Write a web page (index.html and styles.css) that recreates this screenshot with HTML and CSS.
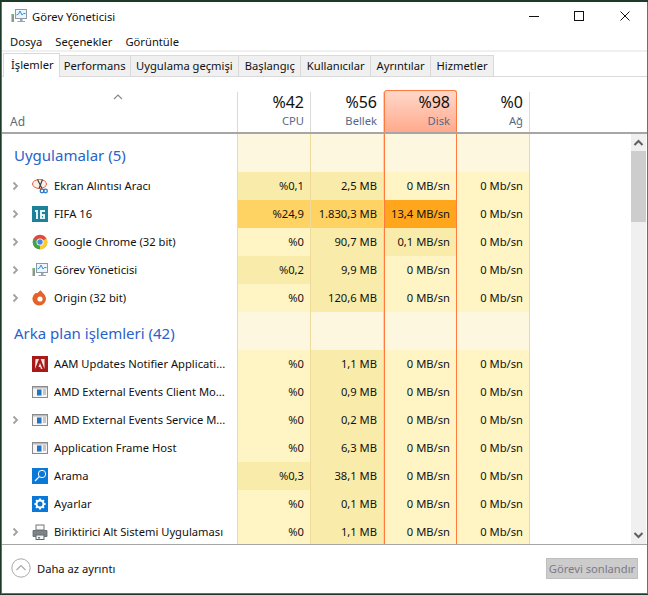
FILE: index.html
```html
<!DOCTYPE html>
<html lang="tr">
<head>
<meta charset="utf-8">
<title>Görev Yöneticisi</title>
<link rel="stylesheet" href="styles.css">
</head>
<body>
<svg class="sprites" width="0" height="0">
  <defs>
    <symbol id="i-tm" viewBox="0 0 16 16">
      <rect x="0.5" y="6" width="2.5" height="8" fill="#8a9a8a"/>
      <rect x="0.8" y="6" width="2" height="2" fill="#5ec45e"/>
      <rect x="4.5" y="1.5" width="11" height="9" fill="#eef4fb" stroke="#8d9aa6"/>
      <path d="M5.5 7l2-1 1.5-3 2 4 1.5-1.5h2" fill="none" stroke="#2f8fdc"/>
      <path d="M9 11h2.5v2H14v1H6.5v-1H9z" fill="#9aa4ac"/>
    </symbol>
    <symbol id="i-snip" viewBox="0 0 16 16">
      <ellipse cx="7.5" cy="6" rx="7" ry="4.5" fill="#fdeee8" stroke="#e2603c"/>
      <path d="M5.5 1.5l4.5 9M10.5 1.5l-3.5 9" stroke="#444" stroke-width="1.2" fill="none"/>
      <circle cx="10" cy="13" r="1.8" fill="none" stroke="#2a78c8" stroke-width="1.3"/>
      <circle cx="13.5" cy="13" r="1.8" fill="none" stroke="#2a78c8" stroke-width="1.3"/>
    </symbol>
    <symbol id="i-fifa" viewBox="0 0 16 16">
      <rect width="16" height="16" fill="#1c8199"/>
      <path d="M3 4h3v9H4V6H3zM8 4h5v2H10v2h3v5H8zM10 10v1.500h1V10z" fill="#e4f2f5" fill-rule="evenodd"/>
    </symbol>
    <symbol id="i-chrome" viewBox="0 0 16 16">
      <circle cx="8" cy="8" r="7.300" fill="#dd4a3a"/>
      <path d="M8 8L1.700 4.400A7.300 7.300 0 0 0 8 15.300z" fill="#3da64f"/>
      <path d="M8 8l6.500-3.500A7.300 7.300 0 0 1 8 15.300z" fill="#fbcd30"/>
      <circle cx="8" cy="8" r="3.500" fill="#fff"/>
      <circle cx="8" cy="8" r="2.700" fill="#4a86e0"/>
    </symbol>
    <symbol id="i-origin" viewBox="0 0 16 16">
      <path d="M8.500 0.200L11.200 3.200A6.800 6.800 0 1 1 3.200 3.200L5.500 3z" fill="#e2642c"/>
      <circle cx="8" cy="9" r="2.600" fill="#fff"/>
    </symbol>
    <symbol id="i-adobe" viewBox="0 0 16 16">
      <rect width="16" height="16" fill="#a81a1a"/>
      <path d="M3.500 3H7L3 13zM8.700 3h3.800v10zM8 7l2.500 6H9l-.7-2H6.500z" fill="#f4e6e6"/>
    </symbol>
    <symbol id="i-frame" viewBox="0 0 16 16">
      <rect x="0.500" y="2.500" width="15" height="11" fill="#f5f5f5" stroke="#8a8a8a"/>
      <rect x="5" y="5.500" width="4.500" height="6" fill="#1f74c8"/>
      <rect x="1" y="3" width="14" height="1.500" fill="#bbb"/>
      <path d="M11 6h3M11 8h3M11 10h3" stroke="#999"/>
    </symbol>
    <symbol id="i-search" viewBox="0 0 16 16">
      <rect width="16" height="16" fill="#0a78d7"/>
      <circle cx="10" cy="6" r="3.700" fill="none" stroke="#fff"/>
      <path d="M7.300 8.700L3 13" stroke="#fff" stroke-width="1.200"/>
    </symbol>
    <symbol id="i-gear" viewBox="0 0 16 16">
      <rect width="16" height="16" fill="#0a78d7"/>
      <circle cx="8" cy="8" r="3.500" fill="none" stroke="#fff" stroke-width="2"/>
      <path d="M8 2.500v2M8 11.500v2M2.500 8h2M11.500 8h2M4.100 4.100l1.400 1.400M10.500 10.500l1.400 1.400M4.100 11.900l1.400-1.400M10.500 5.500l1.400-1.400" stroke="#fff" stroke-width="2"/>
    </symbol>
    <symbol id="i-print" viewBox="0 0 16 16">
      <rect x="4" y="1" width="8" height="5" fill="#fafafa" stroke="#777"/>
      <path d="M1 6.500h14v6h-14z" fill="#7d8488" stroke="#5d6468" stroke-width="0.800"/>
      <rect x="4" y="11" width="8" height="4.500" fill="#f4f4f4" stroke="#666"/>
      <rect x="6" y="13" width="2" height="1.500" fill="#2a9a9a"/>
    </symbol>
    <symbol id="i-chev" viewBox="0 0 7 10">
      <path d="M1.500 1.500L5 5 1.500 8.500" fill="none" stroke="#a0a0a0" stroke-width="1.800"/>
    </symbol>
  </defs>
</svg>
<div class="window">
  <header class="titlebar">
    <svg class="title-icon"><use href="#i-tm"/></svg>
    <span class="title-text">Görev Yöneticisi</span>
    <div class="winctl">
      <svg class="ctl" viewBox="0 0 45 16"><path d="M17 8.500h10" stroke="#111" fill="none"/></svg>
      <svg class="ctl" viewBox="0 0 45 16"><rect x="17.500" y="3.500" width="9" height="9" stroke="#111" fill="none"/></svg>
      <svg class="ctl" viewBox="0 0 45 16"><path d="M18.500 3.500l9 9M27.500 3.500l-9 9" stroke="#111" fill="none"/></svg>
    </div>
  </header>
  <nav class="menu"><span>Dosya</span><span>Seçenekler</span><span>Görüntüle</span></nav>
  <div class="tabs">
    <span class="tab active">İşlemler</span>
    <span class="tab tight">Performans</span>
    <span class="tab">Uygulama geçmişi</span>
    <span class="tab">Başlangıç</span>
    <span class="tab">Kullanıcılar</span>
    <span class="tab">Ayrıntılar</span>
    <span class="tab">Hizmetler</span>
  </div>
  <div class="thead">
    <div class="th-name">
      <svg class="sort" viewBox="0 0 10 6"><path d="M1 5l4-4 4 4" fill="none" stroke="#8a8a8a" stroke-width="1.200"/></svg>
      <span class="th-ad">Ad</span>
    </div>
    <div class="th"><b>%42</b><span>CPU</span></div>
    <div class="th"><b>%56</b><span>Bellek</span></div>
    <div class="th hot"><b>%98</b><span>Disk</span></div>
    <div class="th"><b>%0</b><span>Ağ</span></div>
  </div>
  <div class="body">
    <div class="rows">
      <div class="row group g1"><div class="name">Uygulamalar (5)</div><i></i><i></i><i class="dk"></i><i></i></div>
      <div class="row"><div class="name"><svg class="chev"><use href="#i-chev"/></svg><svg class="ico"><use href="#i-snip"/></svg><span>Ekran Alıntısı Aracı</span></div><i class="h1">%0,1</i><i class="h1">2,5 MB</i><i class="dk">0 MB/sn</i><i>0 Mb/sn</i></div>
      <div class="row"><div class="name"><svg class="chev"><use href="#i-chev"/></svg><svg class="ico"><use href="#i-fifa"/></svg><span>FIFA 16</span></div><i class="h2">%24,9</i><i class="h2">1.830,3 MB</i><i class="dk h3">13,4 MB/sn</i><i>0 Mb/sn</i></div>
      <div class="row"><div class="name"><svg class="chev"><use href="#i-chev"/></svg><svg class="ico"><use href="#i-chrome"/></svg><span>Google Chrome (32 bit)</span></div><i>%0</i><i class="h1">90,7 MB</i><i class="dk h1">0,1 MB/sn</i><i>0 Mb/sn</i></div>
      <div class="row"><div class="name"><svg class="chev"><use href="#i-chev"/></svg><svg class="ico"><use href="#i-tm"/></svg><span>Görev Yöneticisi</span></div><i class="h1">%0,2</i><i class="h1">9,9 MB</i><i class="dk">0 MB/sn</i><i>0 Mb/sn</i></div>
      <div class="row"><div class="name"><svg class="chev"><use href="#i-chev"/></svg><svg class="ico"><use href="#i-origin"/></svg><span>Origin (32 bit)</span></div><i>%0</i><i class="h1">120,6 MB</i><i class="dk">0 MB/sn</i><i>0 Mb/sn</i></div>
      <div class="row group g2"><div class="name">Arka plan işlemleri (42)</div><i></i><i></i><i class="dk"></i><i></i></div>
      <div class="row"><div class="name"><span class="nochev"></span><svg class="ico"><use href="#i-adobe"/></svg><span>AAM Updates Notifier Applicati...</span></div><i>%0</i><i class="h1">1,1 MB</i><i class="dk">0 MB/sn</i><i>0 Mb/sn</i></div>
      <div class="row"><div class="name"><span class="nochev"></span><svg class="ico"><use href="#i-frame"/></svg><span>AMD External Events Client Mo...</span></div><i>%0</i><i class="h1">0,9 MB</i><i class="dk">0 MB/sn</i><i>0 Mb/sn</i></div>
      <div class="row"><div class="name"><svg class="chev"><use href="#i-chev"/></svg><svg class="ico"><use href="#i-frame"/></svg><span>AMD External Events Service M...</span></div><i>%0</i><i class="h1">0,2 MB</i><i class="dk">0 MB/sn</i><i>0 Mb/sn</i></div>
      <div class="row"><div class="name"><span class="nochev"></span><svg class="ico"><use href="#i-frame"/></svg><span>Application Frame Host</span></div><i>%0</i><i class="h1">6,3 MB</i><i class="dk">0 MB/sn</i><i>0 Mb/sn</i></div>
      <div class="row"><div class="name"><span class="nochev"></span><svg class="ico"><use href="#i-search"/></svg><span>Arama</span></div><i class="h1">%0,3</i><i class="h1">38,1 MB</i><i class="dk">0 MB/sn</i><i>0 Mb/sn</i></div>
      <div class="row"><div class="name"><span class="nochev"></span><svg class="ico"><use href="#i-gear"/></svg><span>Ayarlar</span></div><i>%0</i><i class="h1">0,1 MB</i><i class="dk">0 MB/sn</i><i>0 Mb/sn</i></div>
      <div class="row last"><div class="name"><svg class="chev"><use href="#i-chev"/></svg><svg class="ico"><use href="#i-print"/></svg><span>Biriktirici Alt Sistemi Uygulaması</span></div><i>%0</i><i class="h1">1,1 MB</i><i class="dk">0 MB/sn</i><i>0 Mb/sn</i></div>
    </div>
    <div class="scrollbar">
      <svg class="sb-arrow" viewBox="0 0 15 17"><path d="M3.500 11l4-4 4 4" fill="none" stroke="#606060" stroke-width="2"/></svg>
      <div class="sb-thumb"></div>
      <div class="sb-fill"></div>
      <svg class="sb-arrow" viewBox="0 0 15 17"><path d="M3.500 6l4 4 4-4" fill="none" stroke="#606060" stroke-width="2"/></svg>
    </div>
  </div>
  <footer class="footer">
    <svg class="less" viewBox="0 0 20 20"><circle cx="10" cy="10" r="9.200" fill="none" stroke="#a8a8a8"/><path d="M5.500 12l4.500-4.500 4.500 4.500" fill="none" stroke="#a8a8a8" stroke-width="1.200"/></svg>
    <span class="less-text">Daha az ayrıntı</span>
    <span class="end">Görevi sonlandır</span>
  </footer>
</div>
</body>
</html>
```
FILE: styles.css
```css
* { box-sizing: border-box; }
html, body { margin: 0; height: 595px; overflow: hidden; }
body {
  background: #1e3a2a;
  padding: 2px 0 1px 0;
  font-family: "Noto Sans", "Open Sans", sans-serif;
  font-size: 11.2px;
  color: #111;
}
.sprites { position: absolute; }
.window {
  width: 647px;
  height: 592px;
  margin-left: 1px;
  background: #fff;
  border-left: 1px solid #2a7fc4;
  border-right: 1px solid #2a7fc4;
  border-bottom: 1px solid #2a7fc4;
  display: flex;
  flex-direction: column;
}
.titlebar {
  height: 28px;
  display: flex;
  align-items: center;
  padding-left: 9px;
  flex: none;
}
.title-icon { width: 16px; height: 16px; margin-right: 5px; }
.winctl { margin-left: auto; display: flex; align-items: center; }
.ctl { width: 45px; height: 16px; display: block; }
.menu {
  height: 22px;
  flex: none;
  display: flex;
  gap: 13px;
  padding: 4px 0 0 8px;
  border-bottom: 2px solid #f0f0f0;
  line-height: 15px;
}
.tabs {
  height: 25px;
  flex: none;
  display: flex;
  align-items: flex-end;
  padding-left: 1px;
  border-bottom: 1px solid #d9d9d9;
}
.tab {
  height: 21px;
  padding: 0 5.500px;
  background: #f0f0f0;
  border: 1px solid #d9d9d9;
  border-left: 0;
  border-bottom: 0;
  line-height: 20px;
  white-space: nowrap;
}
.tab.tight { padding: 0 4px; }
.tab.active {
  height: 24px;
  background: #fff;
  border-left: 1px solid #d9d9d9;
  margin-bottom: -1px;
  padding: 0 5px 0 7px;
  line-height: 21px;
}
.thead, .row {
  display: grid;
  grid-template-columns: 236px 73px 73px 73px 73px;
}
.thead {
  height: 57px;
  flex: none;
  border-bottom: 2px solid #a6a6a6;
  padding-top: 15px;
}
.th-name { position: relative; border-right: 1px solid #d9d9d9; }
.sort { position: absolute; left: 111px; top: 2px; width: 10px; height: 6px; }
.th-ad { position: absolute; left: 8px; bottom: 2px; font-size: 12px; color: #5a6b80; }
.th {
  border-right: 1px solid #d9d9d9;
  display: flex;
  flex-direction: column;
  align-items: flex-end;
  padding-right: 6px;
}
.th b { font-weight: 400; font-size: 16px; line-height: 20px; }
.th span { font-size: 11.2px; color: #56688a; line-height: 16px; margin-top: 1px; }
.th.hot {
  margin-top: -2px;
  border: 1px solid #ff7a3c;
  border-bottom: 0;
  border-radius: 3px 3px 0 0;
  background: linear-gradient(#ffd8cb, #ffaa8c);
}
.th.hot b { margin-top: 1px; }
.body {
  height: 411px;
  flex: none;
  display: flex;
  border-bottom: 1px solid #a6a6a6;
}
.rows { width: 629px; overflow: hidden; }
.row { height: 28px; line-height: 28px; }
.row.last { height: 26px; }
.group.g1, .group.g2 { height: 38px; }
.name { display: flex; align-items: center; padding-left: 10px; white-space: nowrap; overflow: hidden; }
.group .name { font-size: 15px; color: #2a62c8; padding: 4px 0 0 12px; }
.chev { width: 7px; height: 10px; margin-right: 13px; flex: none; }
.nochev { width: 20px; flex: none; }
.ico { width: 16px; height: 16px; margin-right: 6px; flex: none; }
.row i {
  font-style: normal;
  text-align: right;
  background: #fff4c4;
  padding-right: 6px;
  border-right: 1px solid #eedb9c;
  white-space: nowrap;
}
.row > i:nth-child(2) { border-left: 1px solid #eedb9c; margin-left: -1px; }
.row i.h1 { background: #f9ecaa; }
.row i.h2 { background: #ffd264; }
.row i.h3 { background: #ffa61c; }
.group i { background: #fef7e0; }
.row i.dk { border-left: 1px solid #ff7a3c; border-right: 1px solid #ff7a3c; }
.scrollbar {
  width: 15px;
  background: #f0f0f0;
  display: flex;
  flex-direction: column;
  flex: none;
}
.sb-arrow { width: 15px; height: 17px; flex: none; }
.sb-thumb { height: 71px; background: #cdcdcd; flex: none; }
.sb-fill { flex: 1; }
.footer {
  flex: 1;
  display: flex;
  align-items: center;
  padding: 0 9px 2px;
}
.less { width: 20px; height: 20px; margin-right: 6px; }
.end {
  margin-left: auto;
  width: 92px;
  height: 21px;
  line-height: 19px;
  text-align: center;
  background: #cccccc;
  border: 1px solid #bfbfbf;
  color: #7a7a86;
}
```
